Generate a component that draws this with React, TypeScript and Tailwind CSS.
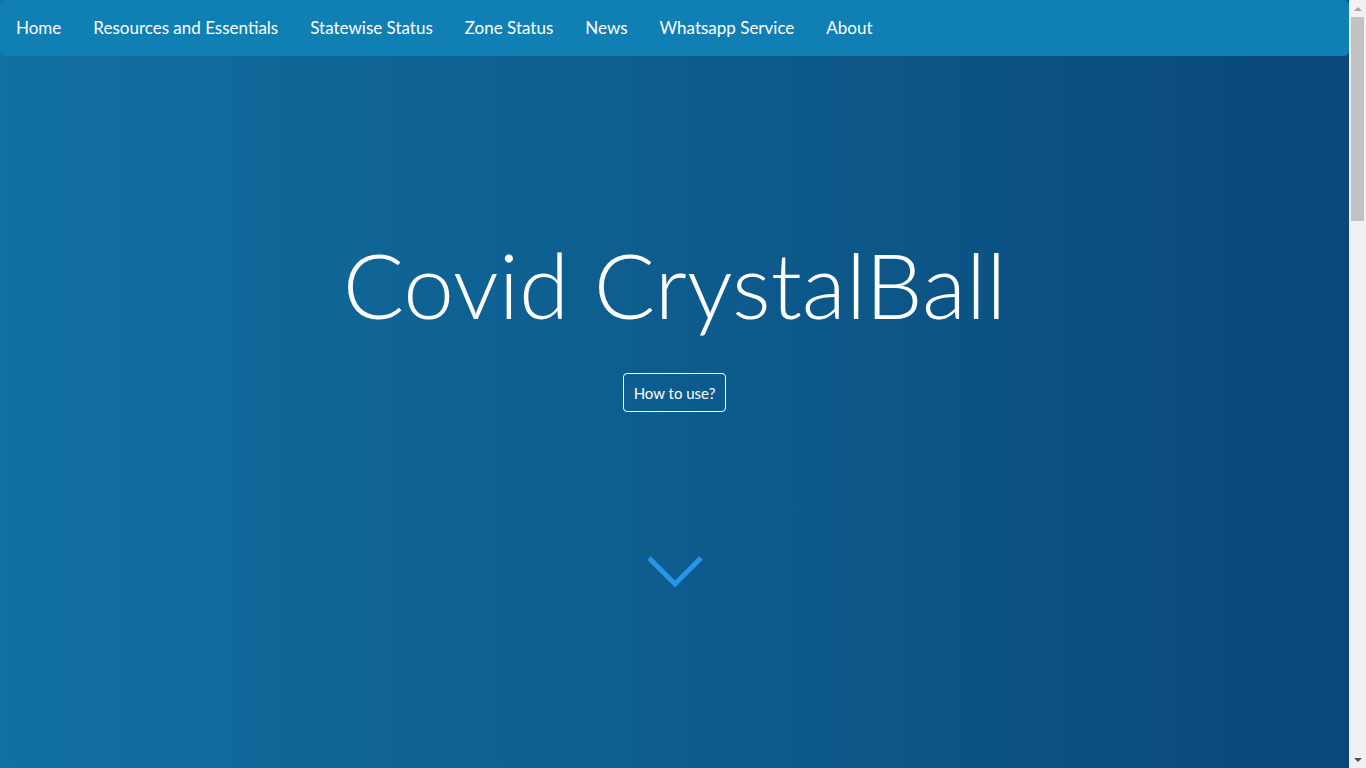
import React from 'react';

const links = ['Home', 'Resources and Essentials', 'Statewise Status', 'Zone Status', 'News', 'Whatsapp Service', 'About'];

function Scrollbar() {
  // browser-style vertical scrollbar drawn on the right edge
  return (
    <div className="w-[17px] h-screen sticky top-0 bg-[#f1f1f1] flex flex-col items-center shrink-0">
      <div className="h-[17px] flex items-center justify-center">
        <div className="w-0 h-0 border-x-[4px] border-x-transparent border-b-[4px] border-b-[#a3a3a3]" />
      </div>
      <div className="w-[13px] h-[204px] bg-[#c1c1c1]" />
      <div className="flex-1" />
      <div className="h-[17px] flex items-center justify-center">
        <div className="w-0 h-0 border-x-[4px] border-x-transparent border-t-[4px] border-t-[#505050]" />
      </div>
    </div>
  );
}

export default function App() {
  return (
    <div className="flex items-start font-['Lato',sans-serif]">
      <div className="flex-1 min-h-screen bg-[linear-gradient(to_right,#1170a0,#0a487b)] text-white">
        <nav className="h-14 flex items-center bg-[#1080b4] rounded-[5px]">
          {links.map((l) => (
            <a key={l} href="#" className="px-4 text-[17px] leading-[26px] text-white">
              {l}
            </a>
          ))}
        </nav>

        <section className="flex flex-col items-center pt-[173px] h-[712px]">
          <h1 className="text-[91px] font-light leading-[1.2]">Covid CrystalBall</h1>
          <button className="mt-[35px] h-[39px] px-[10px] border border-white rounded text-[15px] leading-6">
            How to use?
          </button>
          <svg className="mt-[142px]" width="58" height="38" viewBox="0 0 58 38" fill="none">
            <polyline points="3,4 29,30 55,4" stroke="#2495ea" strokeWidth="5" />
          </svg>
        </section>

        <section className="h-[2000px]" />
      </div>
      <Scrollbar />
    </div>
  );
}
